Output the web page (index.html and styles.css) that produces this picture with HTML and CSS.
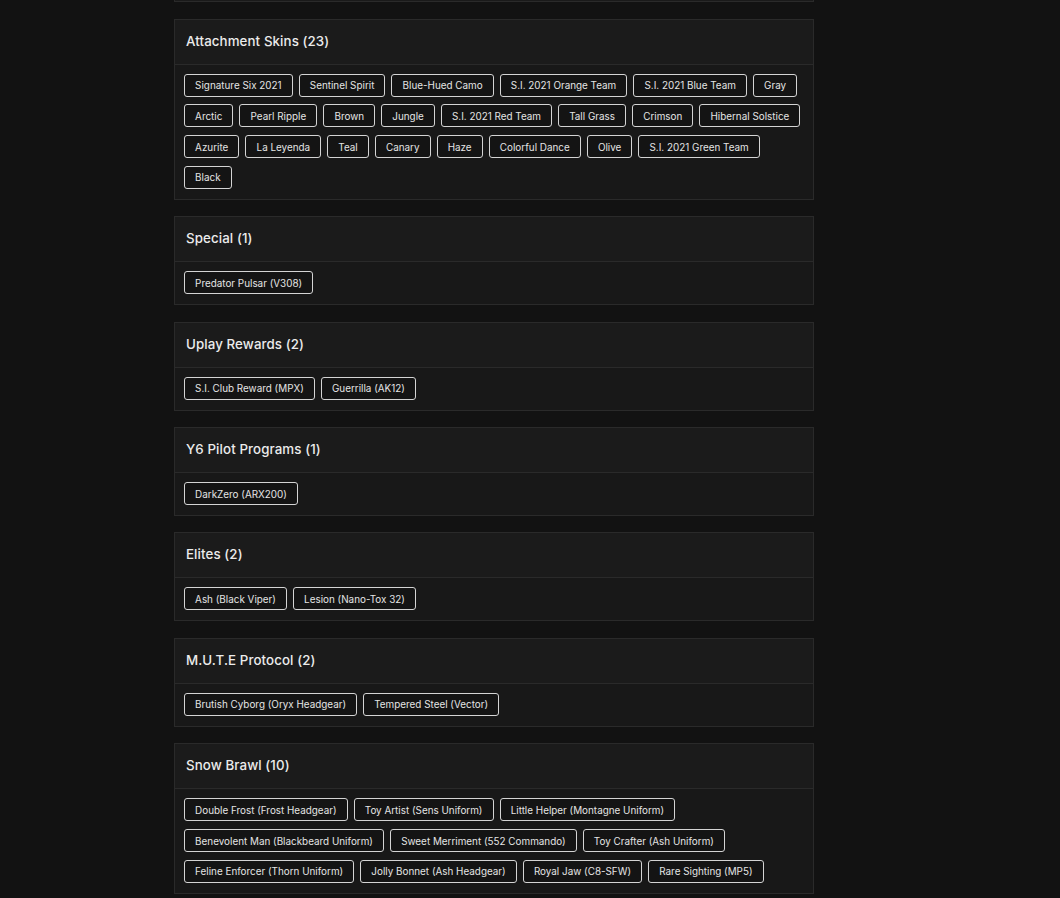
FILE: index.html
```html
<!DOCTYPE html>
<html lang="en">
<head>
<meta charset="utf-8">
<title>Skins</title>
<link rel="stylesheet" href="styles.css">
</head>
<body>
<main class="page">
  <div class="card stub"></div>

  <section class="card">
    <header class="card-head"><h2>Attachment Skins (23)</h2></header>
    <div class="tags">
      <span class="tag">Signature Six 2021</span>
      <span class="tag">Sentinel Spirit</span>
      <span class="tag">Blue-Hued Camo</span>
      <span class="tag">S.I. 2021 Orange Team</span>
      <span class="tag">S.I. 2021 Blue Team</span>
      <span class="tag">Gray</span>
      <span class="tag">Arctic</span>
      <span class="tag">Pearl Ripple</span>
      <span class="tag">Brown</span>
      <span class="tag">Jungle</span>
      <span class="tag">S.I. 2021 Red Team</span>
      <span class="tag">Tall Grass</span>
      <span class="tag">Crimson</span>
      <span class="tag">Hibernal Solstice</span>
      <span class="tag">Azurite</span>
      <span class="tag">La Leyenda</span>
      <span class="tag">Teal</span>
      <span class="tag">Canary</span>
      <span class="tag">Haze</span>
      <span class="tag">Colorful Dance</span>
      <span class="tag">Olive</span>
      <span class="tag">S.I. 2021 Green Team</span>
      <span class="tag">Black</span>
    </div>
  </section>

  <section class="card">
    <header class="card-head"><h2>Special (1)</h2></header>
    <div class="tags">
      <span class="tag">Predator Pulsar (V308)</span>
    </div>
  </section>

  <section class="card">
    <header class="card-head"><h2>Uplay Rewards (2)</h2></header>
    <div class="tags">
      <span class="tag">S.I. Club Reward (MPX)</span>
      <span class="tag">Guerrilla (AK12)</span>
    </div>
  </section>

  <section class="card">
    <header class="card-head"><h2>Y6 Pilot Programs (1)</h2></header>
    <div class="tags">
      <span class="tag">DarkZero (ARX200)</span>
    </div>
  </section>

  <section class="card">
    <header class="card-head"><h2>Elites (2)</h2></header>
    <div class="tags">
      <span class="tag">Ash (Black Viper)</span>
      <span class="tag">Lesion (Nano-Tox 32)</span>
    </div>
  </section>

  <section class="card">
    <header class="card-head"><h2>M.U.T.E Protocol (2)</h2></header>
    <div class="tags">
      <span class="tag">Brutish Cyborg (Oryx Headgear)</span>
      <span class="tag">Tempered Steel (Vector)</span>
    </div>
  </section>

  <section class="card">
    <header class="card-head"><h2>Snow Brawl (10)</h2></header>
    <div class="tags">
      <span class="tag">Double Frost (Frost Headgear)</span>
      <span class="tag">Toy Artist (Sens Uniform)</span>
      <span class="tag">Little Helper (Montagne Uniform)</span>
      <span class="tag">Benevolent Man (Blackbeard Uniform)</span>
      <span class="tag">Sweet Merriment (552 Commando)</span>
      <span class="tag">Toy Crafter (Ash Uniform)</span>
      <span class="tag">Feline Enforcer (Thorn Uniform)</span>
      <span class="tag">Jolly Bonnet (Ash Headgear)</span>
      <span class="tag">Royal Jaw (C8-SFW)</span>
      <span class="tag">Rare Sighting (MP5)</span>
    </div>
  </section>
</main>
</body>
</html>
```

FILE: styles.css
```css
html, body {
  margin: 0;
  padding: 0;
}

body {
  background: #121212;
  color: #e6e6e6;
  font-family: Inter, "Open Sans", "Liberation Sans", sans-serif;
  height: 898px;
  overflow: hidden;
}

.page {
  width: 640px;
  margin-left: 174px;
  display: flex;
  flex-direction: column;
  gap: 16.5px;
}

.card {
  box-sizing: border-box;
  background: #1a1a1a;
  border: 1px solid #2a2a2a;
}

.stub {
  border-top: none;
  height: 2px;
}

.card-head {
  height: 44px;
  display: flex;
  align-items: center;
  padding: 0 11px;
  border-bottom: 1px solid #2a2a2a;
  background: #1b1b1b;
}

.card-head h2 {
  margin: 0;
  font-size: 13.3px;
  font-weight: 500;
  color: #ececec;
  letter-spacing: 0.1px;
  position: relative;
  top: -1px;
}

.tags {
  display: flex;
  flex-wrap: wrap;
  gap: 7.8px 6px;
  padding: 9px 9px 9.9px;
  background: #181818;
}

.tag {
  box-sizing: border-box;
  height: 23px;
  display: inline-flex;
  align-items: center;
  padding: 0 10.1px;
  border: 1px solid #d4d4d4;
  border-radius: 3px;
  background: #141414;
  font-size: 9.9px;
  color: #e4e4e4;
  white-space: nowrap;
}
```
